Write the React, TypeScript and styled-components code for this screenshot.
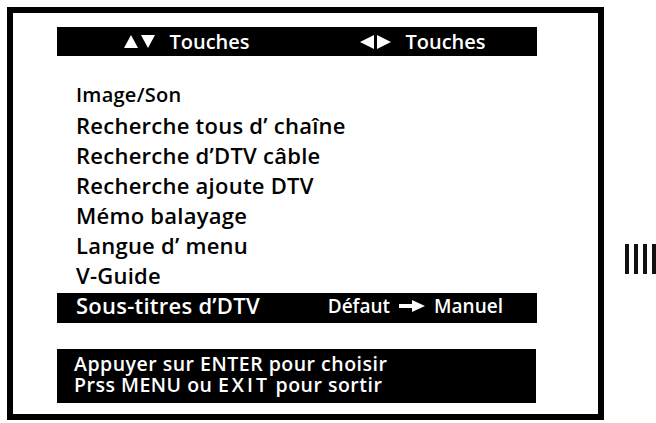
import React from "react";
import styled, { createGlobalStyle } from "styled-components";

const GlobalStyle = createGlobalStyle`
  html, body {
    margin: 0;
    padding: 0;
    background: #ffffff;
  }
  body {
    font-family: "Open Sans", "Noto Sans", "DejaVu Sans", sans-serif;
    color: #000;
  }
`;

const Page = styled.div`
  display: flex;
  align-items: flex-start;
  padding: 7px 0 0 7px;
  width: 656px;
  height: 423px;
  box-sizing: border-box;
  overflow: hidden;
`;

const Frame = styled.div`
  width: 597px;
  height: 413px;
  box-sizing: border-box;
  border: 6px solid #000;
  padding: 14px 0 0 44px;
  display: flex;
  flex-direction: column;
  flex-shrink: 0;
`;

const KeyBar = styled.div`
  width: 480px;
  height: 29px;
  background: #000;
  color: #fff;
  display: grid;
  grid-template-columns: 1fr 1fr;
  column-gap: 8px;
  padding-left: 16px;
  box-sizing: border-box;
  font-size: 20px;
  font-weight: 600;
  line-height: 29px;
`;

const KeyHint = styled.div`
  display: flex;
  align-items: center;
  justify-content: center;
`;

const Arrows = styled.span`
  display: inline-flex;
  align-items: center;
  gap: 3px;
  margin-right: 14px;
`;

const MenuList = styled.div`
  margin-top: 27px;
  display: flex;
  flex-direction: column;
`;

const MenuRow = styled.div<{ $selected?: boolean; $small?: boolean }>`
  width: 480px;
  height: 30px;
  box-sizing: border-box;
  padding-left: 19px;
  display: flex;
  align-items: flex-start;
  font-size: ${(p) => (p.$small ? "20px" : "22px")};
  font-weight: 600;
  letter-spacing: 0.25px;
  line-height: 24px;
  background: ${(p) => (p.$selected ? "#000" : "transparent")};
  color: ${(p) => (p.$selected ? "#fff" : "#000")};
  white-space: nowrap;
`;

const RowValue = styled.span`
  margin-left: auto;
  margin-right: 34px;
  display: inline-flex;
  align-items: center;
  gap: 9px;
  font-size: 19px;
  letter-spacing: 0;
  line-height: 26px;
`;

const Footer = styled.div`
  margin-top: 26px;
  width: 479px;
  box-sizing: border-box;
  background: #000;
  color: #fff;
  padding: 4px 0 8px 17px;
  font-size: 19.5px;
  font-weight: 600;
  letter-spacing: 0.5px;
  line-height: 21px;
`;

const Spaced = styled.span`
  letter-spacing: 3px;
`;

const SideMark = styled.div`
  margin: 237px 0 0 21px;
  display: flex;
  gap: 5px;
`;

const Bar = styled.div`
  width: 4px;
  height: 30px;
  background: #111;
`;

const Tri = ({ dir }: { dir: "up" | "down" | "left" | "right" }) => {
  const pts = {
    up: "0,13 7,0 14,13",
    down: "0,0 14,0 7,13",
    left: "14,0 14,14 0,7",
    right: "0,0 14,7 0,14",
  }[dir];
  return (
    <svg width="14" height="14" viewBox="0 0 14 14">
      <polygon points={pts} fill="#fff" />
    </svg>
  );
};

const HeavyArrow = () => (
  <svg width="26" height="12" viewBox="0 0 26 12">
    <rect x="0" y="4" width="15" height="4" fill="#fff" />
    <polygon points="13,0 26,6 13,12" fill="#fff" />
  </svg>
);

const items = [
  "Recherche tous d’ chaîne",
  "Recherche d’DTV câble",
  "Recherche ajoute DTV",
  "Mémo balayage",
  "Langue d’ menu",
  "V-Guide",
];

export default function App() {
  return (
    <>
      <GlobalStyle />
      <Page>
        <Frame>
          <KeyBar>
            <KeyHint>
              <Arrows>
                <Tri dir="up" />
                <Tri dir="down" />
              </Arrows>
              Touches
            </KeyHint>
            <KeyHint>
              <Arrows>
                <Tri dir="left" />
                <Tri dir="right" />
              </Arrows>
              Touches
            </KeyHint>
          </KeyBar>
          <MenuList>
            <MenuRow $small>Image/Son</MenuRow>
            {items.map((it) => (
              <MenuRow key={it}>{it}</MenuRow>
            ))}
            <MenuRow $selected>
              Sous-titres d’DTV
              <RowValue>
                Défaut <HeavyArrow /> Manuel
              </RowValue>
            </MenuRow>
          </MenuList>
          <Footer>
            <div>Appuyer sur ENTER pour choisir</div>
            <div>
              Prss MENU ou <Spaced>EXIT</Spaced> pour sortir
            </div>
          </Footer>
        </Frame>
        <SideMark>
          <Bar />
          <Bar />
          <Bar />
          <Bar />
        </SideMark>
      </Page>
    </>
  );
}
